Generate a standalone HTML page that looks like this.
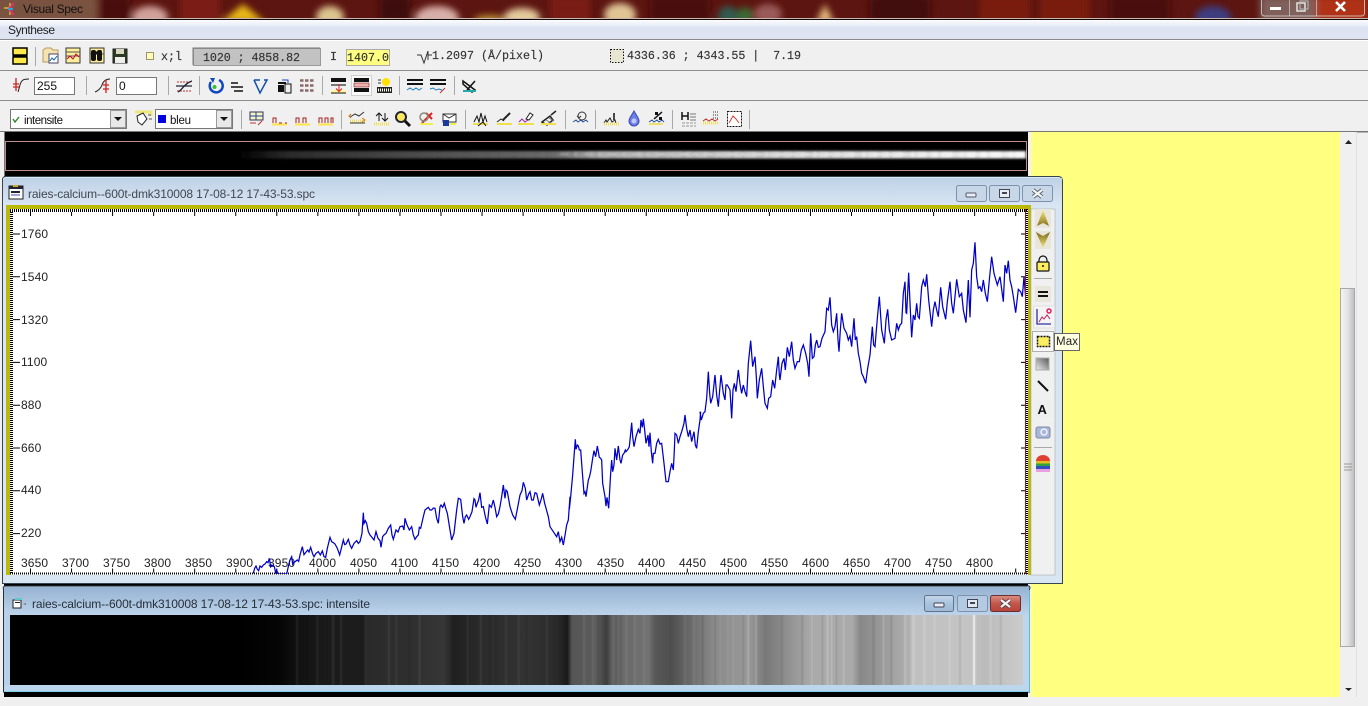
<!DOCTYPE html>
<html><head><meta charset="utf-8"><title>Visual Spec</title>
<style>html,body{margin:0;padding:0;background:#f0f0f0;overflow:hidden}svg{display:block}
text{font-family:"Liberation Sans",sans-serif;white-space:pre}
.m{font-family:"Liberation Mono",monospace;font-size:11.67px;fill:#333;stroke:#333;stroke-width:.15}
.a{font-size:12px;fill:#222;letter-spacing:.12px}.sp{fill:none;stroke:#0000c8;stroke-width:1.25;vector-effect:non-scaling-stroke;stroke-linejoin:miter}
.sep{stroke:#a8a8a8;stroke-width:1}
</style></head><body>
<svg width="1368" height="706" viewBox="0 0 1368 706" xmlns="http://www.w3.org/2000/svg">
<defs>
<filter id="b6" x="-50%" y="-100%" width="200%" height="300%"><feGaussianBlur stdDeviation="3.500"/></filter>
<filter id="b1" x="-5%" y="-50%" width="110%" height="200%"><feGaussianBlur stdDeviation="1"/></filter>
<filter id="bs" x="-2%" y="0" width="104%" height="100%"><feGaussianBlur stdDeviation="1.200 0"/></filter>
<linearGradient id="mn" x1="0" y1="0" x2="0" y2="1"><stop offset="0" stop-color="#fbfcfe"/><stop offset=".3" stop-color="#e8ecf7"/><stop offset=".4" stop-color="#dde3f2"/><stop offset="1" stop-color="#dfe4f2"/></linearGradient>
<linearGradient id="w1" x1="0" y1="0" x2="0" y2="1"><stop offset="0" stop-color="#bfd2e6"/><stop offset="1" stop-color="#d9e5f3"/></linearGradient>
<linearGradient id="w2" x1="0" y1="0" x2="0" y2="1"><stop offset="0" stop-color="#97b3d2"/><stop offset="1" stop-color="#bcd3ea"/></linearGradient>
<linearGradient id="bd" x1="0" y1="0" x2="1" y2="0"><stop offset="0" stop-color="#fff" stop-opacity="0"/><stop offset=".06" stop-color="#fff" stop-opacity=".16"/><stop offset=".2" stop-color="#fff" stop-opacity=".28"/><stop offset=".4" stop-color="#fff" stop-opacity=".42"/><stop offset=".46" stop-color="#fff" stop-opacity=".68"/><stop offset=".7" stop-color="#fff" stop-opacity=".85"/><stop offset="1" stop-color="#fff" stop-opacity=".97"/></linearGradient>
<linearGradient id="st" x1="0" y1="0" x2="1535" y2="0" gradientUnits="userSpaceOnUse">
<stop offset="0" stop-color="#000"/><stop offset=".05" stop-color="#050505"/><stop offset=".07" stop-color="#101010"/><stop offset=".11" stop-color="#1b1b1b"/><stop offset=".157" stop-color="#1c1c1c"/><stop offset=".162" stop-color="#2a2a2a"/><stop offset=".22" stop-color="#2f2f2f"/><stop offset=".26" stop-color="#363636"/><stop offset=".274" stop-color="#202020"/><stop offset=".31" stop-color="#2b2b2b"/><stop offset=".365" stop-color="#333"/><stop offset=".405" stop-color="#2a2a2a"/><stop offset=".418" stop-color="#191919"/><stop offset=".424" stop-color="#555"/><stop offset=".456" stop-color="#5c5c5c"/><stop offset=".468" stop-color="#3c3c3c"/><stop offset=".476" stop-color="#666"/><stop offset=".522" stop-color="#727272"/><stop offset=".53" stop-color="#585858"/><stop offset=".55" stop-color="#4e4e4e"/><stop offset=".587" stop-color="#777"/><stop offset=".606" stop-color="#8a8a8a"/><stop offset=".65" stop-color="#999"/><stop offset=".671" stop-color="#787878"/><stop offset=".71" stop-color="#999"/><stop offset=".73" stop-color="#aaa"/><stop offset=".782" stop-color="#aaa"/><stop offset=".792" stop-color="#888"/><stop offset=".847" stop-color="#aaa"/><stop offset=".86" stop-color="#c0c0c0"/><stop offset=".93" stop-color="#c4c4c4"/><stop offset=".95" stop-color="#bbb"/><stop offset="1" stop-color="#cbcbcb"/></linearGradient>
<linearGradient id="th" x1="0" y1="0" x2="1" y2="0"><stop offset="0" stop-color="#f4f4f4"/><stop offset=".5" stop-color="#e4e4e4"/><stop offset="1" stop-color="#bcbcc0"/></linearGradient>
<linearGradient id="cl" x1="0" y1="0" x2="0" y2="1"><stop offset="0" stop-color="#dc8f84"/><stop offset=".5" stop-color="#c3574a"/><stop offset="1" stop-color="#b8423a"/></linearGradient>
<linearGradient id="bn" x1="0" y1="0" x2="0" y2="1"><stop offset="0" stop-color="#c7d7ea"/><stop offset=".5" stop-color="#a9c2dd"/><stop offset="1" stop-color="#9dbad8"/></linearGradient>
<linearGradient id="gd" x1="0" y1="0" x2="0" y2="1"><stop offset="0" stop-color="#f6ea80"/><stop offset="1" stop-color="#8a7420"/></linearGradient>
<linearGradient id="gd2" x1="0" y1="0" x2="0" y2="1"><stop offset="0" stop-color="#7a6818"/><stop offset="1" stop-color="#f6ea80"/></linearGradient>
<linearGradient id="gr" x1="0" y1="1" x2="1" y2="0"><stop offset="0" stop-color="#eee"/><stop offset="1" stop-color="#555"/></linearGradient>
<clipPath id="plot"><rect x="12" y="212" width="1013" height="362"/></clipPath>
<clipPath id="tb"><rect x="0" y="0" width="1368" height="18"/></clipPath>
</defs>

<!-- Title bar -->
<rect width="1368" height="20" fill="#5c1510"/>
<g clip-path="url(#tb)"><g filter="url(#b6)">
<rect x="-6" y="-6" width="104" height="30" fill="#7a5240"/>
<rect x="100" y="-4" width="30" height="26" fill="#4a100c"/>
<rect x="180" y="-4" width="40" height="26" fill="#7c1a14"/>
<ellipse cx="150" cy="17" rx="18" ry="11" fill="#d0a09a"/>
<path d="M243 4l22 18h-44z" fill="#e8b818"/>
<ellipse cx="330" cy="17" rx="14" ry="11" fill="#dcc48e"/>
<rect x="380" y="-4" width="30" height="26" fill="#3e0d09"/>
<ellipse cx="437" cy="18" rx="22" ry="12" fill="#d8aea8"/>
<ellipse cx="490" cy="20" rx="16" ry="5" fill="#b89030"/>
<ellipse cx="522" cy="17" rx="18" ry="9" fill="#e4cc9c"/>
<rect x="550" y="-4" width="40" height="26" fill="#7a1a12"/>
<ellipse cx="620" cy="15" rx="16" ry="12" fill="#e0c494"/>
<rect x="650" y="-4" width="60" height="26" fill="#481009"/>
<ellipse cx="728" cy="16" rx="10" ry="10" fill="#305a50"/><ellipse cx="745" cy="16" rx="8" ry="9" fill="#3a6a30"/>
<ellipse cx="768" cy="14" rx="14" ry="10" fill="#9a5a5a"/>
<path d="M825 4l9 18h-18z" fill="#e4bc7c"/>
<rect x="870" y="-4" width="60" height="26" fill="#430f0b"/>
<rect x="980" y="-4" width="50" height="26" fill="#7a1c10"/>
<rect x="1040" y="-4" width="50" height="26" fill="#7a1c10"/>
<rect x="1110" y="-4" width="60" height="26" fill="#481009"/>
<ellipse cx="1213" cy="17" rx="18" ry="11" fill="#3c3c80"/>
<rect x="1260" y="-4" width="56" height="26" fill="#80605a"/><rect x="1316" y="-4" width="52" height="26" fill="#b03018"/>
</g></g>
<rect y="18" width="1368" height="1" fill="#c8b8b0"/><rect y="19" width="1368" height="1" fill="#120606"/>
<g>
<path d="M4 8h6M10 3v12" stroke="#b8a040" stroke-width="2"/><path d="M14 3l-5 6 5 6" fill="none" stroke="#e03070" stroke-width="2"/><path d="M8 9l5 0" stroke="#30a0e0" stroke-width="2"/>
<text x="23" y="13" font-size="12" fill="#111" textLength="60">Visual Spec</text>
</g>
<rect x="1261.500" y="-3" width="103" height="19" rx="3" fill="none" stroke="#ddd" stroke-opacity=".75"/>
<path d="M1289.500 0v16M1316.500 0v16" stroke="#ddd" stroke-opacity=".6"/>
<rect x="1270" y="7" width="11" height="3" fill="#fff"/>
<rect x="1297" y="3" width="8" height="8" fill="none" stroke="#ddd" stroke-width="1.600"/><rect x="1300" y="1" width="8" height="8" fill="none" stroke="#bbb" stroke-width="1"/>
<path d="M1336 2l9 9M1345 2l-9 9" stroke="#fff" stroke-width="2.600"/>

<!-- Menu bar -->
<rect y="20" width="1368" height="19" fill="url(#mn)"/>
<rect y="39" width="1368" height="1" fill="#8a8a8a"/><rect y="40" width="1368" height="1" fill="#fff"/>
<text x="8" y="34" font-size="12" fill="#222" textLength="47">Synthese</text>

<!-- Toolbars -->
<rect y="41" width="1368" height="91" fill="#f0f0f0"/>
<rect y="70" width="1368" height="1" fill="#8e8e8e"/><rect y="100" width="1368" height="1" fill="#8e8e8e"/><rect y="131" width="1368" height="1.500" fill="#777"/>
<path class="sep" d="M35.500 47v19M86.500 76v19M168.500 76v19M199.500 76v19M322.500 76v19M399.500 76v19M454.500 76v19M241.500 110v19M341.500 110v19M465.500 110v19M565.500 110v19M595.500 110v19M672.500 110v19M749.500 110v19"/>

<!-- Row 1 -->
<g>
<rect x="13" y="48" width="14" height="7" fill="#ffe94d" stroke="#000" stroke-width="1.500"/><rect x="13" y="57" width="14" height="7" fill="#ffe94d" stroke="#000" stroke-width="1.500"/><path d="M13 55.500h14" stroke="#000" stroke-width="2"/>
<path d="M43 62V50l3-2h5l2 2h5v12z" fill="#f4e2b0" stroke="#b99a60"/><rect x="49" y="54" width="9" height="9" fill="#fff" stroke="#446"/><path d="M50 61l2-3 2 2 3-4" fill="none" stroke="#06a"/>
<rect x="66" y="48" width="14" height="15" fill="#ffef9a" stroke="#333"/><path d="M66 52h14M66 56h14" stroke="#555"/><path d="M67 59l3-3 3 3 3-5 3 3" fill="none" stroke="#c03"/>
<rect x="90" y="48" width="14" height="15" fill="#ffef9a" stroke="#333"/><path d="M90 54h14" stroke="#555"/><rect x="91" y="50" width="5" height="11" rx="2" fill="#111"/><rect x="97" y="50" width="5" height="11" rx="2" fill="#111"/><path d="M95 53h3" stroke="#111" stroke-width="3"/>
<rect x="113" y="49" width="14" height="14" fill="#2b3a20" stroke="#222"/><rect x="116" y="49" width="8" height="5" fill="#d8d8c0"/><rect x="115" y="57" width="10" height="6" fill="#eee"/>
<rect x="146.500" y="52.500" width="7" height="7" fill="#fdfbc0" stroke="#9a9660"/>
</g>
<text class="m" x="161" y="60" textLength="21">x;l</text>
<rect x="193.500" y="48.500" width="127" height="17" fill="#c2c2c2" stroke="#999"/>
<path d="M193 65V48h127" fill="none" stroke="#777"/>
<text class="m" x="203" y="61" textLength="97">1020 ; 4858.82</text>
<text class="m" x="330" y="60">I</text>
<rect x="346.500" y="49.500" width="43" height="16" fill="#ffff80" stroke="#aaa"/>
<text class="m" x="347" y="61" textLength="42">1407.0</text>
<path d="M417 55h4l3 8 4-12M428 51v9M428 55h4" fill="none" stroke="#333" stroke-width="1"/>
<text class="m" x="432" y="59" textLength="112">1.2097 (Å/pixel)</text>
<rect x="610.500" y="49.500" width="13" height="13" fill="#e8e6d2" stroke="#111" stroke-dasharray="1.500 1.500"/>
<text class="m" x="627" y="59" textLength="174">4336.36 ; 4343.55 |  7.19</text>

<!-- Row 2 -->
<g fill="none">
<path d="M18 92c2-6 2-10 5-12 2-1 4-1 6-1" stroke="#222"/><path d="M16 78v13M13 84h6M13 87h6" stroke="#d02020" stroke-width="1.300"/>
<rect x="34.500" y="77.500" width="40" height="17" fill="#fff" stroke="#777"/>
<path d="M95 92c3-1 6-4 7-7s3-6 8-6" stroke="#222"/><path d="M106 80v13M103 85h6M103 89h6" stroke="#d02020" stroke-width="1.300"/>
<rect x="116.500" y="77.500" width="40" height="17" fill="#fff" stroke="#777"/>
<path d="M177 82h15M177 91h15" stroke="#c03030" stroke-dasharray="2 1"/><path d="M178 92c4-2 7-9 14-11M176 86h16" stroke="#223" stroke-width="1.300"/>
<path d="M219 80a6.500 6.500 0 1 1-8 2" stroke="#1048c0" stroke-width="2.500"/><path d="M210 78l5 0-2 5z" fill="#1048c0"/><circle cx="214.500" cy="87" r="2" fill="#30c030"/>
<path d="M231 83h7M231 87h12M234 91h9" stroke="#111" stroke-width="1.500"/>
<path d="M254 80l6 13 7-13-3 0" stroke="#1050a8" stroke-width="1.500"/><path d="M254 80h6" stroke="#1050a8" stroke-width="1.500"/>
<rect x="278" y="85" width="6" height="7" fill="#111"/><rect x="285" y="84" width="6" height="9" fill="#eee" stroke="#111"/><rect x="278" y="82" width="8" height="2" fill="#111"/><path d="M282 80h6v3" stroke="#2040c0"/>
<path d="M300 80.500h14M300 85.500h14M300 90.500h14" stroke="#8a6868" stroke-width="2.500" stroke-dasharray="3.500 1.500"/>
<rect x="331" y="78" width="15" height="4" fill="#111"/><path d="M331 85h15" stroke="#777" stroke-width="2"/><rect x="331" y="90" width="15" height="3" fill="#fff6a0"/><path d="M331 93h15" stroke="#111"/><path d="M339 84v7M336 88.500l3 3 3-3" stroke="#e02020"/>
<rect x="351.500" y="75.500" width="20" height="20" fill="#fafafa" stroke="#d0d0d0"/><rect x="354" y="78" width="15" height="4" fill="#111"/><rect x="354" y="83" width="15" height="4" fill="#f0b0b0" stroke="#822" stroke-width=".6"/><rect x="354" y="88" width="15" height="4" fill="#111"/>
<circle cx="386" cy="82" r="4" fill="#ffe000"/><path d="M378 80h3M378 83h3" stroke="#333"/><rect x="377" y="87" width="15" height="6" fill="#222"/><path d="M378 90h13" stroke="#ffe" stroke-width="3" stroke-dasharray="1 1"/>
<path d="M407 80h16M407 84h16" stroke="#111" stroke-width="2"/><path d="M407 90l3-2 3 2 3-2 3 2 3-2" stroke="#2080c0"/>
<path d="M430 80h16M430 84h16" stroke="#111" stroke-width="2"/><path d="M430 89l3-1 3 2 3-1 3 1" stroke="#2080c0"/><path d="M440 93l5-5" stroke="#c03030"/>
<path d="M463 81l12 9-3 2-9-8zM475 81l-8 9" stroke="#111" stroke-width="1.500"/><path d="M463 91h13" stroke="#2aa" stroke-width="2"/>
</g>
<text x="37" y="90" font-size="12" fill="#111">255</text>
<text x="119" y="90" font-size="12" fill="#111">0</text>

<!-- Row 3 -->
<rect x="10.500" y="109.500" width="116" height="19" fill="#fff" stroke="#777"/>
<rect x="110.500" y="110.500" width="15" height="17" fill="#e8e8e8" stroke="#999"/><path d="M114 117h8l-4 4z" fill="#111"/>
<path d="M13 119l2 3 4-5" fill="none" stroke="#208020" stroke-width="1.300"/>
<text x="24" y="124" font-size="11.500" fill="#111" textLength="39">intensite</text>
<rect x="155.500" y="109.500" width="77" height="19" fill="#fff" stroke="#777"/>
<rect x="216.500" y="110.500" width="15" height="17" fill="#e8e8e8" stroke="#999"/><path d="M220 117h8l-4 4z" fill="#111"/>
<rect x="158" y="115" width="8" height="8" fill="#0000e0"/>
<text x="170" y="124" font-size="11.500" fill="#111" textLength="21">bleu</text>
<g fill="none">
<path d="M135 112h16v4" stroke="#eee87a" stroke-width="3"/><path d="M137 116l6-3 4 6-5 6-4-3z" fill="#fff" stroke="#222"/><path d="M148 115h3M149 119h3" stroke="#555"/>
<rect x="250" y="112" width="13" height="8" fill="#f4f4c0" stroke="#335"/><path d="M250 116h13M256 112v8" stroke="#2040a0"/><path d="M250 123h6M258 125l4-4" stroke="#c03030"/>
<g stroke="#a02020"><path d="M273 123v-5h3v5M279 123h3M285 123h2"/></g><path d="M272 124.500h15" stroke="#ffe34a" stroke-width="2"/>
<g stroke="#a02020"><path d="M296 123v-5h3v5M303 123v-5h3v5"/></g><path d="M295 124.500h15" stroke="#ffe34a" stroke-width="2"/>
<g stroke="#a02020"><path d="M319 123v-5h3v5M325 123v-5h3v5M331 123v-5h2v5"/></g><path d="M318 124.500h15" stroke="#ffe34a" stroke-width="2"/>
<path d="M350 117l5-3 4 2 5-4M350 123h15" stroke="#333"/><path d="M350 121h15" stroke="#f0e050" stroke-width="3" stroke-dasharray="1 1"/><path d="M351 114l-2 2 2 2M362 118l3 2-3 2" stroke="#d07010"/>
<path d="M379 113v8M376 116l3-3 3 3M385 113v8M382 118l3 3 3-3" stroke="#111"/><path d="M374 124h15" stroke="#f0e050" stroke-width="3" stroke-dasharray="1 1"/>
<circle cx="401" cy="117" r="5" fill="#ffe860" stroke="#223" stroke-width="2"/><path d="M405 121l5 5" stroke="#111" stroke-width="3"/>
<path d="M426 113l6 6 M432 113l-10 10" stroke="#e02020" stroke-width="2"/><circle cx="424" cy="117" r="4" stroke="#887" stroke-width="1.500"/><path d="M420 124h13" stroke="#ee5" stroke-width="2"/>
<rect x="443" y="114" width="13" height="8" fill="#fff" stroke="#333"/><path d="M443 114l6 4 7-4" stroke="#333"/><rect x="443" y="120" width="6" height="6" fill="#1c3a9a"/><path d="M450 124h6" stroke="#ee5" stroke-width="2"/>
<path d="M474 122l3-6 2 6 2-9 2 9 2-6 2 6" stroke="#111"/><path d="M473 124h15" stroke="#f0e050" stroke-width="2"/><path d="M478 126l5-4 3 4" stroke="#111"/>
<path d="M497 122l4-3 3 2" stroke="#222"/><path d="M503 120l7-7" stroke="#222" stroke-width="2"/><path d="M497 124h15" stroke="#f0e050" stroke-width="2"/>
<path d="M519 122l3-3 3 3 3-2" stroke="#a020a0"/><path d="M526 119l4-6 3 2-4 5z" fill="#fff" stroke="#222"/><path d="M518 124h16" stroke="#f0e050" stroke-width="2"/>
<path d="M542 122l8-6 3 4-6 5zM551 115l5-4" stroke="#222" stroke-width="1.500"/><path d="M541 124h15" stroke="#f0e050" stroke-width="2"/><path d="M546 120l5 3M549 118l5 3" stroke="#777"/>
<path d="M573 122l3-2 2 2 3-2 2 2 3-2 2 2" stroke="#2a50a0"/><circle cx="582" cy="116" r="4" stroke="#333"/><path d="M577 116l2 2 2-2" stroke="#333"/>
<path d="M604 123l2-3 1 2 3-4 2 4 3-2 1 3" stroke="#222"/><path d="M604 124h15" stroke="#f0e050" stroke-width="3" stroke-dasharray="1 1"/><path d="M614 113v7" stroke="#111" stroke-width="1.500"/>
<path d="M634 111c-2 4-5 7-5 10a5 5 0 0 0 10 0c0-3-3-6-5-10z" fill="#6f7fe8" stroke="#3a48b0"/><circle cx="634" cy="121" r="2.500" fill="#c0c8ff"/>
<path d="M649 122l3-2 2 2 3-2 2 2 3-2 2 2" stroke="#2a50a0"/><path d="M654 119l8-7" stroke="#222" stroke-width="1.500"/><rect x="655" y="112" width="3" height="3" fill="#111"/><rect x="659" y="117" width="3" height="3" fill="#111"/><path d="M649 124h14" stroke="#eee070" stroke-width="2"/>
<path d="M682 112v8M688 112v8M682 116h6" stroke="#111" stroke-width="1.500"/><path d="M690 114h6M690 117h6M690 120h6" stroke="#777"/><path d="M682 123h14M682 126h14" stroke="#999" stroke-dasharray="3 1"/>
<path d="M713 112h5M713 115h5M713 118h5" stroke="#333" stroke-dasharray="1 1"/><path d="M703 121l3-2 3 2 3-2 3 2 3-2" stroke="#c03030"/><path d="M703 123h16" stroke="#f0e050" stroke-width="3" stroke-dasharray="1 1"/>
<rect x="727.500" y="111.500" width="14" height="15" fill="#fff" stroke="#111" stroke-dasharray="2 1"/><path d="M729 123l4-7 3 3 3 4" stroke="#d04040"/>
</g>

<!-- MDI black -->
<rect x="4" y="132" width="1024" height="565" fill="#000"/>
<rect x="0" y="132" width="4" height="574" fill="#f0f0f0"/>
<rect x="1028" y="132" width="3" height="565" fill="#f2f2f2"/>
<rect x="4" y="132" width="1" height="44" fill="#777"/>
<rect x="1031" y="132" width="309" height="565" fill="#ffff80"/>
<rect x="5.500" y="141.500" width="1021" height="29" fill="none" stroke="#c08a8a"/>
<g filter="url(#b1)"><rect x="240" y="151" width="786" height="7.500" fill="url(#bd)"/>
<path d="M240 152.500h786M240 156.500h786" stroke="#000" stroke-opacity=".22" stroke-dasharray="5 7 3 11 8 4 2 9"/>
<path d="M560 153h466M560 155h466" stroke="#fff" stroke-opacity=".35" stroke-dasharray="9 5 3 7"/></g>

<!-- Scrollbar -->
<rect x="1340" y="132" width="16" height="565" fill="#f0f0f0"/>
<rect x="1356" y="132" width="1" height="565" fill="#e2e2e2"/>
<rect x="1340.500" y="288.500" width="14" height="358" fill="url(#th)" stroke="#a8a8a8"/>
<path d="M1345 144l3.500-4 3.500 4z" fill="#222"/><path d="M1345 688h7l-3.500 3z" fill="#222"/>
<path d="M1344 464h8M1344 467h8M1344 470h8" stroke="#999"/>
<rect x="1031" y="697" width="325" height="1" fill="#e2e2e2"/>
<rect x="0" y="697" width="1368" height="9" fill="#f0f0f0"/>

<!-- Window 1 -->
<path d="M2.500 583.500V180a3 3 0 0 1 3-3.500H1058a4 4 0 0 1 4.500 4V583.500z" fill="#d8e5f2" stroke="#3a4450"/>
<path d="M3 178h1059v28H3z" fill="url(#w1)"/>
<rect x="3" y="206" width="7" height="377" fill="#d8e5f2"/>
<g fill="none">
<rect x="9" y="186" width="14" height="13" fill="#fff" stroke="#222"/><rect x="9" y="186" width="14" height="3" fill="#223"/><path d="M11 192h9" stroke="#223" stroke-width="2"/><path d="M11 195h9" stroke="#44a" stroke-width="1"/><rect x="13" y="185" width="5" height="2" fill="#c8b020"/>
</g>
<text x="28" y="198" font-size="12" fill="#404850" textLength="287">raies-calcium--600t-dmk310008 17-08-12 17-43-53.spc</text>
<g>
<rect x="956.500" y="185.500" width="30" height="16" rx="2" fill="#c8d7e8" stroke="#7d92ac"/>
<rect x="966" y="193" width="10" height="4" rx="1" fill="#e8eef6" stroke="#556"/>
<rect x="989.500" y="185.500" width="30" height="16" rx="2" fill="#c8d7e8" stroke="#7d92ac"/>
<rect x="999.500" y="189.500" width="10" height="8" fill="#e8eef6" stroke="#445"/><rect x="1002" y="192" width="5" height="2" fill="#445"/>
<rect x="1022.500" y="185.500" width="30" height="16" rx="2" fill="#c8d7e8" stroke="#7d92ac"/>
<path d="M1033 190l9 7M1042 190l-9 7" stroke="#55606c" stroke-width="4"/><path d="M1033 190l9 7M1042 190l-9 7" stroke="#f4f4f4" stroke-width="2.200"/>
</g>
<!-- plot -->
<rect x="6" y="205" width="1025" height="370" fill="#bcb808"/>
<rect x="10" y="209" width="1018" height="366" fill="#fff"/>
<rect x="3" y="575" width="1059" height="8" fill="#d8e5f2"/>
<rect x="3" y="206" width="3" height="369" fill="#d8e5f2"/>
<path d="M11.500 212V574" stroke="#000" stroke-width="3" stroke-dasharray="1 1"/>
<path d="M10 210.500H1028" stroke="#000" stroke-width="3" stroke-dasharray="1 1"/>
<path d="M10 573.500H1028" stroke="#000" stroke-width="2" stroke-dasharray="1 1"/>
<path d="M1025.500 209V574" stroke="#a01010" stroke-width="1"/>
<path d="M1027 209V574" stroke="#000" stroke-width="2" stroke-dasharray="1 1"/>
<path d="M30 214H1026" stroke="#000" stroke-width="4" stroke-dasharray="1 40.050"/>
<path d="M30 570.500H1026" stroke="#000" stroke-width="4" stroke-dasharray="1 40.050"/>
<path d="M16.500 233.500V572" stroke="#000" stroke-width="7" stroke-dasharray="1 41.800"/>
<path d="M1023 233.500V572" stroke="#000" stroke-width="4" stroke-dasharray="1 41.800"/>
<g class="a">
<text class="a" x="21" y="238">1760</text><text class="a" x="21" y="281">1540</text><text class="a" x="21" y="324">1320</text><text class="a" x="21" y="366">1100</text><text class="a" x="21" y="409">880</text><text class="a" x="21" y="452">660</text><text class="a" x="21" y="494">440</text><text class="a" x="21" y="537">220</text>
<text class="a" x="21" y="567">3650</text><text class="a" x="62" y="567">3700</text><text class="a" x="103" y="567">3750</text><text class="a" x="144" y="567">3800</text><text class="a" x="185" y="567">3850</text><text class="a" x="226" y="567">3900</text><text class="a" x="268" y="567">3950</text><text class="a" x="309" y="567">4000</text><text class="a" x="350" y="567">4050</text><text class="a" x="391" y="567">4100</text><text class="a" x="432" y="567">4150</text><text class="a" x="473" y="567">4200</text><text class="a" x="514" y="567">4250</text><text class="a" x="555" y="567">4300</text><text class="a" x="597" y="567">4350</text><text class="a" x="638" y="567">4400</text><text class="a" x="679" y="567">4450</text><text class="a" x="720" y="567">4500</text><text class="a" x="761" y="567">4550</text><text class="a" x="802" y="567">4600</text><text class="a" x="843" y="567">4650</text><text class="a" x="884" y="567">4700</text><text class="a" x="925" y="567">4750</text><text class="a" x="966" y="567">4800</text>
</g>
<g clip-path="url(#plot)">
<g transform="translate(240 420) scale(.33333)"><polyline class="sp" points="40,460 44,445 48,438 52,448 56,452 60,438 65,442 70,435 75,432 80,425 84,428 88,415 92,440 95,435 103,440 107,458 110,450 114,462 118,462 140,462 146,435 150,420 155,410 158,432 160,428 165,425 172,420 176,424 180,405 187,380 192,404 195,400 203,390 207,396 212,382 218,402 222,410 228,400 235,395 241,405 247,393 252,410 257,412 262,385 270,352 275,365 280,368 285,372 292,385 299,405 304,385 310,360 314,374 318,372 325,358 330,375 335,385 342,370 350,362 355,370 360,365 366,340 370,278 372,310 376,302 380,310 385,335 390,345 396,352 402,360 408,335 414,355 420,362 423,382 428,350 432,345 438,340 445,325 452,315 456,345 460,358 468,330 474,336 480,320 488,318 492,330 495,295 500,312 508,330 515,320 520,345 525,358 530,350 535,345 538,322 542,325 550,290 555,270 560,266 565,262 570,270 575,270 580,264 585,265 590,295 595,310 600,260 603,255 608,262 613,250 618,268 622,280 630,330 635,360 642,340 650,270 655,235 662,238 668,290 672,310 676,290 680,285 686,298 690,290 696,275 702,236 705,240 708,262 712,250 716,240 720,218 725,262 730,260 736,290 742,312 748,255 754,262 760,240 765,262 770,290 775,282 780,260 785,230 790,195 795,235 798,210 802,215 810,260 818,285 826,298 833,262 840,225 846,212 850,187 856,205 860,240 866,222 870,215 875,240 880,240 885,218 890,220 898,255 903,240 908,220 914,250 925,290 930,320 940,335 950,350 955,335 960,365 965,352 970,375 976,340 980,315 985,300 990,230"/></g>
<g transform="translate(560 400) scale(.33333)"><polyline class="sp" points="28,328 32,290 38,225 42,170 46,118 48,148 52,135 55,138 58,150 62,150 68,230 72,280 75,275 78,290 85,240 88,232 92,215 98,175 102,152 107,170 112,138 118,172 122,175 125,180 128,250 135,290 138,318 141,292 146,325 152,220 155,180 158,215 162,195 165,145 170,180 175,138 180,180 183,190 188,165 192,160 196,150 198,155 204,148 208,140 212,100 215,68 218,110 222,140 228,110 235,88 240,100 243,60 247,82 250,56 254,90 258,130 264,105 267,140 270,98 274,155 278,190 280,160 285,160 290,130 295,118 300,132 305,130 312,190 318,245 325,245 330,215 335,190 340,210 343,150 345,100 350,105 355,130 360,110 365,95 372,70 375,45 380,85 385,110 390,90 395,125 402,95 406,135 410,145 415,95 420,60 422,35"/></g>
<g transform="translate(640 230) scale(.33333)"><polyline class="sp" points="180,545 184,570 190,550 195,545 200,505 205,425 209,490 212,520 218,500 225,435 230,495 235,530 239,480 243,435 250,490 255,510 258,465 262,465 270,480 275,565 279,480 283,460 288,485 295,420 300,462 305,490 310,465 315,485 320,500 325,400 332,332 338,410 345,380 349,440 352,505 358,450 365,415 370,470 375,520 382,535 386,505 392,500 398,450 404,475 410,420 415,380 418,435 420,450 426,400 432,385 436,420 442,352 448,380 455,335 460,390 465,415 472,395 478,395 484,360 490,345 497,370 503,400 507,440 512,310 517,385 522,380 526,345 530,330 535,352 540,350 546,325 555,305 560,235 565,240 570,202 575,285 580,305 585,290 590,250 594,330 597,365 601,300 605,250 612,295 620,310 625,330 630,318 635,350 642,265 646,330 650,320 655,370 660,395 665,430 670,440 677,460 683,415 690,375 697,290 701,345 705,350 712,265 718,200 725,300 733,340 738,270 743,238 748,300 755,330 765,325 770,280 775,300 780,285 785,280 790,190 795,155 798,248 800,250 806,128 811,240 815,322 820,255 825,270 830,220 834,260 838,265 845,170 850,150 856,170 860,133 866,210 875,290 880,240 885,215 890,240 895,260 902,172 908,230 917,268 922,215 930,155 935,220 940,250 945,200 950,148 958,200 965,190 970,240 978,278 985,150 990,262 995,120 1000,100 1005,37 1010,140 1015,175 1020,170 1025,185 1030,150 1036,190 1042,215 1048,150 1055,80 1062,130 1072,165 1080,140 1090,215 1095,105 1100,130 1105,92 1110,150 1115,170 1120,200 1127,248 1135,178 1142,185 1147,200 1152,140 1160,240"/></g>
</g>

<!-- Right panel -->
<rect x="1031" y="209" width="24" height="366" fill="#f0f0f0" stroke="#aaa" stroke-width=".6"/>
<g fill="none">
<rect x="1035" y="209" width="16" height="19" fill="#e8e6da"/><path d="M1043 210l6 16-6-3-6 3z" fill="url(#gd)"/>
<rect x="1035" y="231" width="16" height="18" fill="#e8e6da"/><path d="M1036 232l7 4 7-4-7 16z" fill="url(#gd2)"/>
<rect x="1037" y="262" width="12" height="9" rx="1" fill="#ffef60" stroke="#111" stroke-width="1.200"/><path d="M1039 262v-2a4 4 0 0 1 8 0v2" stroke="#111" stroke-width="1.200"/><circle cx="1043" cy="266" r="1" fill="#111"/>
<path class="sep" d="M1034 278.500h18M1034 447.500h18"/>
<rect x="1035" y="286" width="16" height="16" fill="#e8e6da"/><path d="M1038 292h10M1038 296h10" stroke="#111" stroke-width="2"/>
<rect x="1033.500" y="306" width="21" height="22" fill="#f4f4f4" stroke="#e0e0e0"/><path d="M1037 309v15h14" stroke="#3030a0" stroke-width="1.300"/><path d="M1039 322l3-5 2 2 3-4 3 4" stroke="#c02060"/><circle cx="1049" cy="311" r="2" stroke="#e02060" stroke-width="1.500"/>
<rect x="1032.500" y="331.500" width="21" height="20" fill="#f8f8f8" stroke="#b0b0b0"/><rect x="1037.500" y="336.500" width="12" height="10" fill="#ffef60" stroke="#111" stroke-width="1.500" stroke-dasharray="2 1"/>
<rect x="1036" y="358" width="13" height="12" fill="url(#gr)" stroke="#aaa"/>
<path d="M1038 381l10 10" stroke="#111" stroke-width="2"/>
<rect x="1035" y="401" width="16" height="16" fill="#eee"/>
<rect x="1036" y="427" width="14" height="11" rx="2" fill="#a8b6d8" stroke="#7a88a8"/><circle cx="1044" cy="432" r="3" stroke="#f0f0ff" stroke-width="1.500"/>
<path d="M1036 461a7 6 0 0 1 14 0z" fill="#e04030"/><rect x="1036" y="461" width="14" height="2.500" fill="#e0c020"/><rect x="1036" y="463.500" width="14" height="2.500" fill="#30a040"/><rect x="1036" y="466" width="14" height="3" fill="#3050c0"/><rect x="1036" y="469" width="14" height="3" fill="#e8a0e0"/>
</g>
<text x="1037.500" y="414" font-size="13" font-weight="bold" fill="#111">A</text>
<rect x="1054.500" y="333.500" width="25" height="17" fill="#ffffe1" stroke="#666"/>
<text x="1056" y="345" font-size="11.500" fill="#222" textLength="22">Max</text>

<!-- Window 2 -->
<path d="M3.500 692V589a2 2 0 0 1 2-3H1027a2 2 0 0 1 2.500 3V692z" fill="#b7d0ea" stroke="#26303a"/>
<rect x="4" y="587" width="1025" height="28" fill="url(#w2)"/>
<rect x="4" y="685" width="1025" height="6" fill="#bcd6ee"/>
<rect x="4" y="691" width="1026" height="1" fill="#7fd0ea"/>
<rect x="1029" y="590" width="1" height="102" fill="#60b8d8"/>
<rect x="13" y="600" width="8" height="8" fill="#fff" stroke="#222"/><rect x="15" y="602" width="5" height="1" fill="#222"/><rect x="15" y="598" width="7" height="2" fill="#60c8c8"/><path d="M23 604l3-1v2z" fill="#777"/>
<text x="32" y="608" font-size="12" fill="#26303a" textLength="338">raies-calcium--600t-dmk310008 17-08-12 17-43-53.spc: intensite</text>
<g>
<rect x="924.500" y="595.500" width="29" height="16" rx="2" fill="url(#bn)" stroke="#60748e"/><rect x="934" y="603" width="10" height="4" rx="1" fill="#e8eef6" stroke="#445"/>
<rect x="957.500" y="595.500" width="30" height="16" rx="2" fill="#b4cae2" stroke="#7d92ac"/><rect x="967.500" y="599.500" width="10" height="8" fill="#e0e8f2" stroke="#445"/><rect x="970" y="602" width="5" height="2" fill="#445"/>
<rect x="990.500" y="595.500" width="30" height="16" rx="2" fill="url(#cl)" stroke="#6a3030"/><path d="M1001 600l9 7M1010 600l-9 7" stroke="#55404a" stroke-width="4"/><path d="M1001 600l9 7M1010 600l-9 7" stroke="#f4f4f4" stroke-width="2.200"/>
</g>
<rect x="10" y="615" width="230" height="70" fill="#000"/>
<svg x="240" y="615" width="783" height="70" viewBox="0 0 1535 70" preserveAspectRatio="none">
<rect width="1535" height="70" fill="url(#st)"/>
<g filter="url(#bs)">
<g fill="#fff" fill-opacity=".07"><rect x="110" width="4" height="70"/><rect x="150" width="3" height="70"/><rect x="180" width="5" height="70"/><rect x="196" width="4" height="70"/><rect x="245" width="2" height="70"/><rect x="290" width="4" height="70"/><rect x="305" width="3" height="70"/><rect x="350" width="4" height="70"/><rect x="445" width="3" height="70"/><rect x="470" width="4" height="70"/><rect x="520" width="3" height="70"/><rect x="545" width="3" height="70"/><rect x="600" width="3" height="70"/><rect x="672" width="5" height="70"/><rect x="690" width="4" height="70"/><rect x="755" width="5" height="70"/><rect x="772" width="4" height="70"/><rect x="790" width="4" height="70"/><rect x="870" width="5" height="70"/><rect x="888" width="4" height="70"/><rect x="940" width="3" height="70"/><rect x="955" width="3" height="70"/><rect x="965" width="4" height="70"/></g>
<g fill="#fff" fill-opacity=".2"><rect x="995" width="3" height="70"/><rect x="1010" width="3" height="70"/><rect x="1120" width="2" height="70"/><rect x="1150" width="4" height="70"/><rect x="1158" width="3" height="70"/><rect x="1182" width="3" height="70"/><rect x="1260" width="3" height="70"/><rect x="1302" width="3" height="70"/><rect x="1318" width="4" height="70"/><rect x="1340" width="3" height="70"/><rect x="1360" width="3" height="70"/><rect x="1390" width="3" height="70"/><rect x="1470" width="3" height="70"/></g>
<g fill="#000" fill-opacity=".1"><rect x="130" width="4" height="70"/><rect x="170" width="3" height="70"/><rect x="330" width="4" height="70"/><rect x="415" width="4" height="70"/><rect x="488" width="4" height="70"/><rect x="500" width="3" height="70"/><rect x="560" width="4" height="70"/><rect x="700" width="4" height="70"/><rect x="735" width="4" height="70"/><rect x="745" width="3" height="70"/><rect x="905" width="4" height="70"/><rect x="930" width="3" height="70"/><rect x="985" width="3" height="70"/><rect x="1060" width="4" height="70"/><rect x="1100" width="4" height="70"/><rect x="1140" width="3" height="70"/><rect x="1168" width="3" height="70"/><rect x="1240" width="4" height="70"/><rect x="1275" width="4" height="70"/><rect x="1310" width="2" height="70"/><rect x="1410" width="3" height="70"/><rect x="1490" width="3" height="70"/></g>
<rect x="1437" width="4" height="70" fill="#eee"/>
</g>
</svg>
<rect x="1023" y="615" width="6" height="70" fill="#bcd6ee"/>
<rect x="4" y="692" width="1024" height="5" fill="#000"/>
</svg>
</body></html>
